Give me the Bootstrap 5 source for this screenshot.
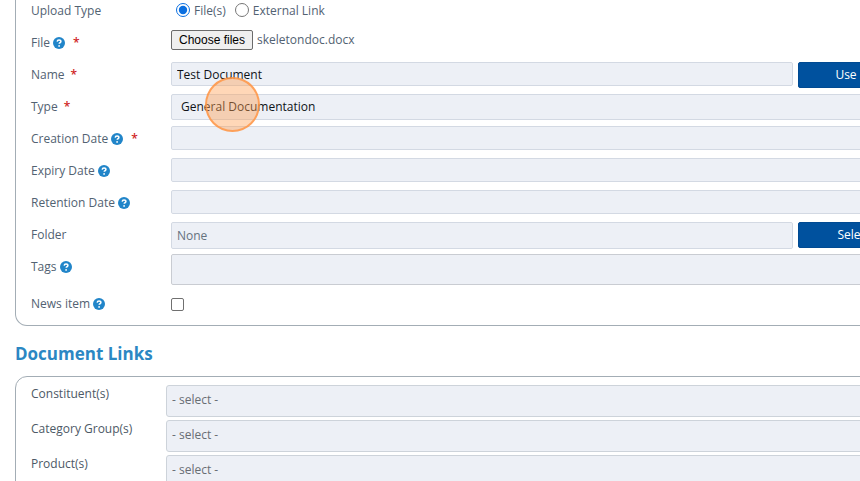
<!DOCTYPE html>
<html lang="en">
<head>
<meta charset="utf-8">
<meta name="viewport" content="width=device-width, initial-scale=1">
<title>Document upload</title>
<link href="https://cdn.jsdelivr.net/npm/bootstrap@5.3.0/dist/css/bootstrap.min.css" rel="stylesheet">
<style>
body { font-family: "Open Sans", sans-serif; font-size: 12px; color: #526272; background: #fff; overflow-x: hidden; }
/* the form is wider than the window and runs off its right edge */
.sheet { margin-left: 15px; margin-right: -70px; }
.panel { border: 1px solid #a3adb5; border-radius: 12px; padding: 0 15px 5px; }
.panel-upper { border-top: 0; border-top-left-radius: 0; border-top-right-radius: 0; }
.panel-links { padding-top: 8px; }
.line { display: grid; grid-template-columns: 140px minmax(0, 1fr); align-items: start; min-height: 32px; }
.line-first { min-height: 27px; }
.line-tags { min-height: 37px; }
.caption { line-height: 32px; display: flex; align-items: center; }
.line-first .caption { line-height: 22px; }
.req { color: #d01f26; font-size: 12px; font-weight: 600; margin-left: 6px; }
.help + .req { margin-left: 8px; }
.help { width: 12px; height: 12px; margin-left: 3px; flex: none; }
.entry { margin-top: 3px; min-width: 0; }
.line .form-control, .line .form-select { font-size: 12px; line-height: 18px; height: 24px; padding: 2px 5px; border: 1px solid #d3d9e3; border-radius: 2px; background-color: #edf0f6; color: #101418; }
.line .form-select { height: 26px; padding: 2px 28px 2px 9px; }
.line .folder-box { height: 27px; color: #66727e; }
.line .tags-box { height: 31px; border-color: #c9ccd2; }
.action { width: 116px; height: 26px; flex: none; margin-left: 5px; padding: 0 4px 0 0; font-size: 12px; line-height: 24px; color: #fff; background: #00519e; border: 1px solid #004a92; border-radius: 2px; }
.action-use { padding-right: 20px; }
.action:hover { background: #00407e; color: #fff; }
.choose { font-family: "Liberation Sans", Arial, sans-serif; font-size: 12px; line-height: 18px; padding: 0 7px; height: 20px; color: #000; background: #efefef; border: 1px solid #6b6b6b; border-radius: 2px; }
.line .form-check-input { width: 13px; height: 13px; margin: 0; border: 1px solid #707070; background-color: #fff; }
.line .dot { appearance: auto; accent-color: #0b6fe0; width: 14px; height: 14px; margin: 0 4px 2px 5px; }
.news-box { margin-top: 10px; }
.line .news-box .form-check-input { border-radius: 2px; }
.title { font-size: 17px; line-height: 24px; font-weight: 700; color: #2b87c3; margin: 16px 0 10px; }
.line-link { grid-template-columns: 135px minmax(0, 1fr); min-height: 35px; }
.line-link .caption { line-height: 18px; color: #4d5966; }
.line-link .form-select { height: 32px; padding: 4px 28px 6px 5px; border-radius: 3px; border-color: #cdd3da; color: #686e74; }
.touch { position: absolute; left: 34px; top: -17px; width: 55px; height: 55px; border: 2px solid rgba(255, 148, 66, .8); border-radius: 50%; background: rgba(255, 160, 84, .42); pointer-events: none; }
</style>
<script src="https://cdn.jsdelivr.net/npm/bootstrap@5.3.0/dist/js/bootstrap.bundle.min.js"></script>
</head>
<body>
<svg class="d-none" aria-hidden="true">
  <symbol id="help" viewBox="0 0 12 12"><circle cx="6" cy="6" r="6" fill="#2185c9"/><path d="M4.2 4.6C4.3 3.4 5 2.9 6 2.9c1.1 0 1.9.6 1.9 1.5 0 1.1-1.6 1.2-1.7 2.4" fill="none" stroke="#fff" stroke-width="1.5"/><circle cx="6.1" cy="8.9" r=".9" fill="#fff"/></symbol>
</svg>
<main class="sheet">
<form>
  <section class="panel panel-upper">
    <div class="line line-first">
      <span class="caption">Upload Type</span>
      <div class="d-flex align-items-center">
        <input class="form-check-input dot" type="radio" name="kind" id="kindFile" checked>
        <label class="caption me-1" for="kindFile">File(s)</label>
        <input class="form-check-input dot" type="radio" name="kind" id="kindLink">
        <label class="caption" for="kindLink">External Link</label>
      </div>
    </div>
    <div class="line">
      <label class="caption" for="choose">File<svg class="help"><use href="#help"/></svg><span class="req">*</span></label>
      <div class="entry d-flex align-items-center gap-1">
        <button type="button" class="choose" id="choose">Choose files</button><span>skeletondoc.docx</span>
      </div>
    </div>
    <div class="line">
      <label class="caption" for="name">Name<span class="req">*</span></label>
      <div class="entry d-flex align-items-start">
        <input class="form-control" id="name" type="text" value="Test Document">
        <button type="button" class="btn action action-use">Use</button>
      </div>
    </div>
    <div class="line">
      <label class="caption" for="type">Type<span class="req">*</span></label>
      <div class="entry position-relative">
        <select class="form-select" id="type"><option>General Documentation</option></select>
        <span class="touch"></span>
      </div>
    </div>
    <div class="line">
      <label class="caption" for="created">Creation Date<svg class="help"><use href="#help"/></svg><span class="req">*</span></label>
      <div class="entry"><input class="form-control" id="created" type="text"></div>
    </div>
    <div class="line">
      <label class="caption" for="expiry">Expiry Date<svg class="help"><use href="#help"/></svg></label>
      <div class="entry"><input class="form-control" id="expiry" type="text"></div>
    </div>
    <div class="line">
      <label class="caption" for="retention">Retention Date<svg class="help"><use href="#help"/></svg></label>
      <div class="entry"><input class="form-control" id="retention" type="text"></div>
    </div>
    <div class="line">
      <label class="caption" for="folder">Folder</label>
      <div class="entry d-flex align-items-start">
        <input class="form-control folder-box" id="folder" type="text" value="None" readonly>
        <button type="button" class="btn action">Select</button>
      </div>
    </div>
    <div class="line line-tags">
      <label class="caption" for="tags">Tags<svg class="help"><use href="#help"/></svg></label>
      <div class="entry"><input class="form-control tags-box" id="tags" type="text"></div>
    </div>
    <div class="line">
      <label class="caption" for="news">News item<svg class="help"><use href="#help"/></svg></label>
      <div class="news-box d-flex"><input class="form-check-input" id="news" type="checkbox"></div>
    </div>
  </section>

  <h2 class="title">Document Links</h2>

  <section class="panel panel-links">
    <div class="line line-link">
      <label class="caption" for="constituents">Constituent(s)</label>
      <select class="form-select" id="constituents"><option>- select -</option></select>
    </div>
    <div class="line line-link">
      <label class="caption" for="groups">Category Group(s)</label>
      <select class="form-select" id="groups"><option>- select -</option></select>
    </div>
    <div class="line line-link">
      <label class="caption" for="products">Product(s)</label>
      <select class="form-select" id="products"><option>- select -</option></select>
    </div>
  </section>
</form>
</main>
</body>
</html>
